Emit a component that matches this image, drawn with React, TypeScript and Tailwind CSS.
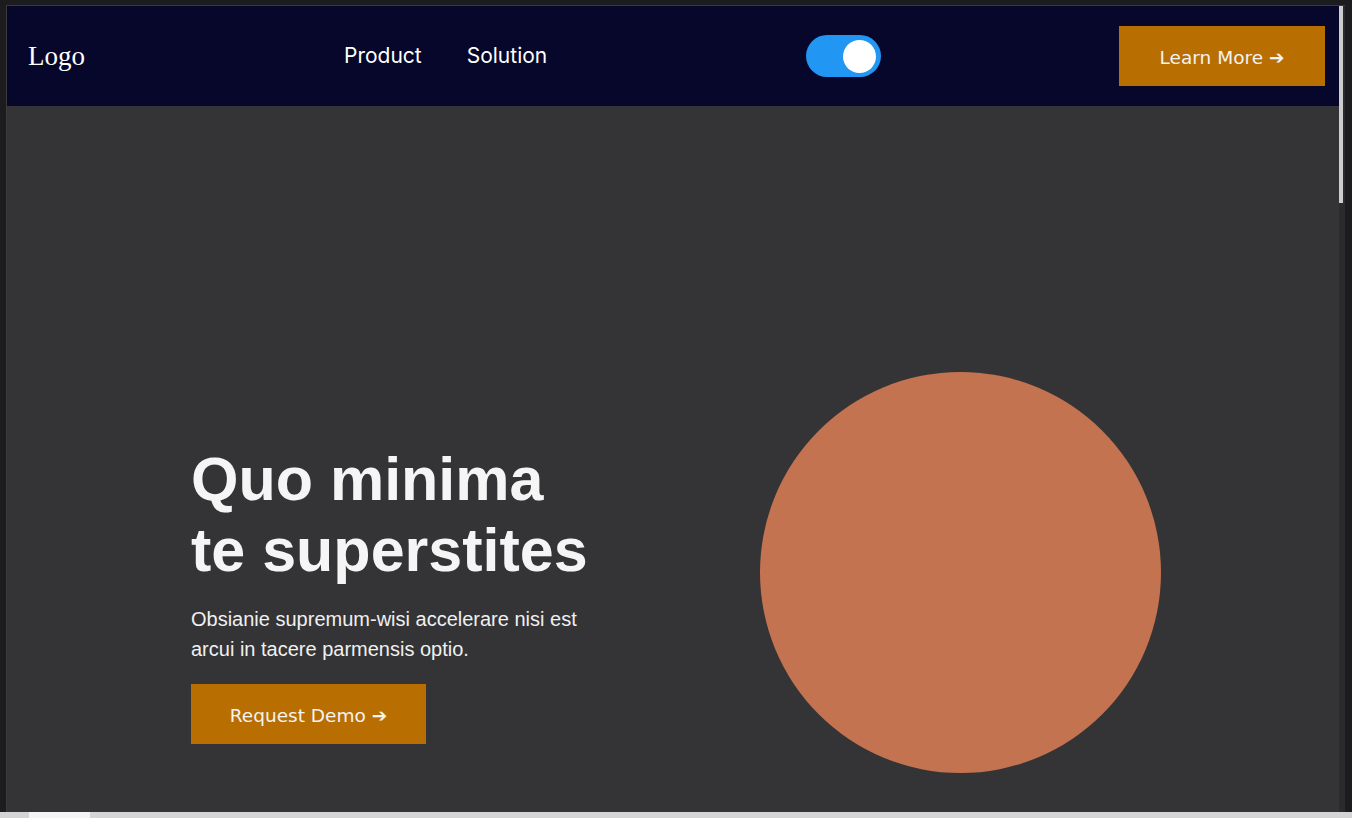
import React from "react";

export default function App() {
  return (
    <div className="w-[1352px] h-[818px] bg-[#1c1c1e] flex flex-col overflow-hidden">
      <div className="flex-1 min-h-0 flex pt-[5px] pl-[6px] pr-[7px]">
        <div className="flex-1 min-h-0 flex border-l border-t border-[#3a3a3c]">
          <main className="flex-1 min-w-0 flex flex-col">
            <nav className="h-[100px] shrink-0 bg-[#06072a] flex items-center">
              <div
                className="ml-[21px] w-[57px] text-[27px] leading-none text-white"
                style={{ fontFamily: '"Liberation Serif", "DejaVu Serif", serif' }}
              >
                Logo
              </div>
              <div
                className="ml-[259px] w-[203px] flex items-center gap-[45px] text-[21px] text-white"
                style={{ fontFamily: 'Inter, "Noto Sans", sans-serif' }}
              >
                <span>Product</span>
                <span>Solution</span>
              </div>
              <div className="ml-[259px] w-[75px] h-[42px] rounded-full bg-[#2196f3] flex items-center justify-end pr-[5px]">
                <div className="w-[33px] h-[33px] rounded-full bg-white" />
              </div>
              <button
                className="ml-auto mr-[14px] h-[60px] w-[206px] pt-[3px] bg-[#b86e00] text-[#f3f3f3] text-[18.5px]"
                style={{ fontFamily: '"DejaVu Sans", Verdana, sans-serif' }}
              >
                Learn More ➔
              </button>
            </nav>
            <section className="flex-1 min-h-0 bg-[#343436] flex items-start pl-[184px] pt-[266px] overflow-hidden">
              <div className="w-[569px] shrink-0 pt-[72px]" style={{ fontFamily: '"Liberation Sans", Arial, sans-serif' }}>
                <div className="max-w-[412px]">
                  <h1 className="text-[61px] leading-[71px] font-bold text-[#f5f5f5]">
                    Quo minima te superstites
                  </h1>
                  <p className="mt-[18px] text-[20px] leading-[30px] text-[#f0f0f0]">
                    Obsianie supremum-wisi accelerare nisi est arcui in tacere parmensis optio.
                  </p>
                  <button
                    className="mt-[20px] h-[60px] w-[235px] pt-[3px] bg-[#b86e00] text-[#f3f3f3] text-[18.5px]"
                    style={{ fontFamily: '"DejaVu Sans", Verdana, sans-serif' }}
                  >
                    Request Demo ➔
                  </button>
                </div>
              </div>
              <div className="w-[401px] h-[401px] shrink-0 rounded-full bg-[#c37350]" />
            </section>
          </main>
          <div className="w-[6px] shrink-0 bg-[#2b2b2d] flex">
            <div className="w-[4px] h-[197px] bg-[#cdcdcd]" />
          </div>
        </div>
      </div>
      <div className="h-[6px] shrink-0 bg-[#d4d4d4] flex">
        <div className="ml-[29px] w-[61px] bg-[#f4f4f4]" />
      </div>
    </div>
  );
}
